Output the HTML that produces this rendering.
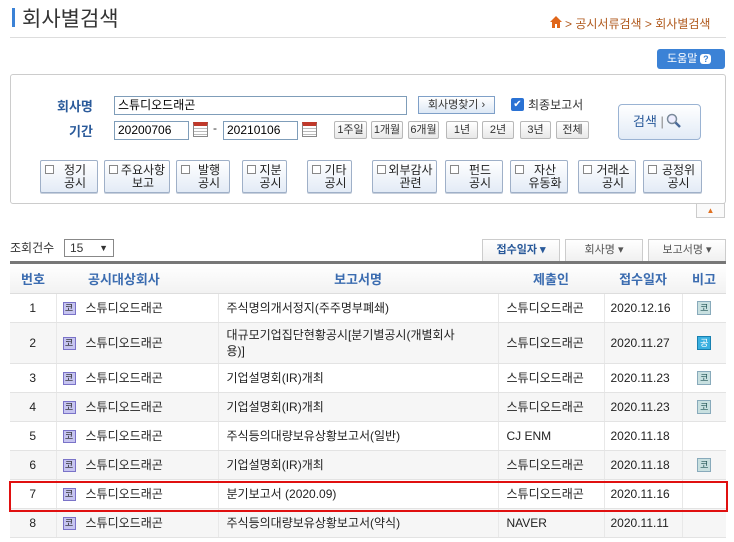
<!DOCTYPE html>
<html><head><meta charset="utf-8"><style>
*{margin:0;padding:0;box-sizing:border-box}
body{width:734px;height:542px;overflow:hidden;background:#fff;font-family:"Liberation Sans","Noto Sans CJK KR","NanumGothic",sans-serif;font-size:12px;color:#333;position:relative}
.a{position:absolute}
.inp{position:absolute;border:1px solid #7f9db9;background:#fff;height:19px;font-size:12px;line-height:17px;padding-left:3px;color:#000}
.pb{position:absolute;top:121px;height:18px;border:1px solid #b8b8b8;border-radius:2px;background:linear-gradient(#fff,#e8e8e8);font-size:11px;line-height:16px;text-align:center;color:#333}
.cat{position:absolute;top:160px;height:33px;border:1px solid #9fb0c8;border-radius:2px;background:linear-gradient(#fff,#e3ebf6);font-size:12px;line-height:13px;text-align:center;padding:3px 0 0 12px;color:#222;box-shadow:0 1px 0 #c8d0dc}
.cat i{position:absolute;left:4px;top:4px;width:9px;height:9px;border:1px solid #888;background:#fff}
.cal{position:absolute;top:122px;width:15px;height:15px;border:1px solid #888;border-top:4px solid #c0392b;background:repeating-linear-gradient(#fff 0 2px,#bbb 2px 3px)}
.tab{position:absolute;top:239px;height:22px;border:1px solid #ccc;border-bottom:none;background:linear-gradient(#fff,#f0f0f0);font-size:11px;line-height:21px;text-align:center;color:#555}
table{position:absolute;left:10px;top:264px;width:716px;border-collapse:collapse}
th{height:29px;color:#3b6cb0;font-weight:bold;font-size:13px;background:linear-gradient(#fff,#f2f2f2);border-bottom:1px solid #ddd}
td{height:29px;border-bottom:1px solid #e3e3e3;border-left:1px solid #e8e8e8;font-size:12px;color:#222}
td:first-child{border-left:none;text-align:center}
tr.g td{background:#f6f6f6}
.k{display:inline-block;width:13px;height:13px;background:#c6c4f0;border:1px solid #7a73c8;font-size:9px;line-height:11px;text-align:center;color:#222;vertical-align:middle;margin:0 10px 0 6px}
.b{display:inline-block;width:14px;height:14px;background:#c8e0e0;border:1px solid #8ab;font-size:9px;line-height:12px;text-align:center;color:#255;}
.b2{background:#3ab0e0;border-color:#1880b0;color:#fff}
</style></head><body>
<div class="a" style="left:12px;top:8px;width:3px;height:19px;background:#3b82d6"></div>
<div class="a" style="left:22px;top:3px;font-size:21px;color:#333">회사별검색</div>
<svg class="a" style="left:550px;top:16px" width="12" height="12" viewBox="0 0 12 12"><path d="M6 0L0 6h2v6h3V8h2v4h3V6h2z" fill="#e0661a"/></svg>
<div class="a" style="left:565px;top:15px;font-size:12px;color:#b05a1e">&gt; 공시서류검색 &gt; 회사별검색</div>
<div class="a" style="left:10px;top:37px;width:716px;height:1px;background:#ddd"></div>
<div class="a" style="left:657px;top:49px;width:68px;height:20px;background:#3b82d6;border-radius:3px;color:#fff;font-size:11px;line-height:20px;padding-left:10px">도움말 <span style="display:inline-block;width:11px;height:10px;background:#fff;color:#3b82d6;border-radius:3px;font-size:9px;line-height:10px;text-align:center;font-weight:bold">?</span></div>

<div class="a" style="left:10px;top:74px;width:716px;height:130px;border:1px solid #ccc;border-radius:3px"></div>
<div class="a" style="left:57px;top:96px;font-size:13px;font-weight:bold;color:#2a5a9a">회사명</div>
<div class="inp" style="left:114px;top:96px;width:293px">스튜디오드래곤</div>
<div class="a" style="left:418px;top:96px;width:77px;height:18px;border:1px solid #7fa0c8;background:linear-gradient(#fff,#dde8f5);font-size:11px;line-height:16px;text-align:center">회사명찾기 ›</div>
<div class="a" style="left:511px;top:98px;width:13px;height:13px;background:#2a72d4;border-radius:2px;color:#fff;font-size:10px;line-height:13px;text-align:center">✔</div>
<div class="a" style="left:528px;top:96px;font-size:12px">최종보고서</div>
<div class="a" style="left:69px;top:121px;font-size:13px;font-weight:bold;color:#2a5a9a">기간</div>
<div class="inp" style="left:114px;top:121px;width:75px">20200706</div>
<div class="cal" style="left:193px"></div>
<div class="a" style="left:213px;top:121px">-</div>
<div class="inp" style="left:223px;top:121px;width:75px">20210106</div>
<div class="cal" style="left:302px"></div>
<div class="pb" style="left:334px;width:33px">1주일</div>
<div class="pb" style="left:371px;width:32px">1개월</div>
<div class="pb" style="left:408px;width:31px">6개월</div>
<div class="pb" style="left:446px;width:32px">1년</div>
<div class="pb" style="left:482px;width:32px">2년</div>
<div class="pb" style="left:520px;width:31px">3년</div>
<div class="pb" style="left:556px;width:33px">전체</div>
<div class="a" style="left:618px;top:104px;width:83px;height:36px;border:1px solid #9ab3d3;border-radius:4px;background:linear-gradient(#fff,#e2ebf6);font-size:13px;line-height:34px;color:#2a5a9a;padding-left:14px">검색 <span style="color:#888">|</span><svg width="16" height="16" viewBox="0 0 16 16" style="vertical-align:-3px;margin-left:2px"><circle cx="6" cy="6" r="4.5" fill="#eef" stroke="#7a8a9a" stroke-width="1.5"/><path d="M9.5 9.5L14 14" stroke="#4a6a9a" stroke-width="2.5"/></svg></div>

<div class="cat" style="left:40px;width:58px"><i></i>정기<br>공시</div>
<div class="cat" style="left:104px;width:66px"><i></i>주요사항<br>보고</div>
<div class="cat" style="left:176px;width:54px"><i></i>발행<br>공시</div>
<div class="cat" style="left:242px;width:45px"><i></i>지분<br>공시</div>
<div class="cat" style="left:307px;width:45px"><i></i>기타<br>공시</div>
<div class="cat" style="left:372px;width:65px"><i></i>외부감사<br>관련</div>
<div class="cat" style="left:445px;width:58px"><i></i>펀드<br>공시</div>
<div class="cat" style="left:510px;width:58px"><i></i>자산<br>유동화</div>
<div class="cat" style="left:578px;width:58px"><i></i>거래소<br>공시</div>
<div class="cat" style="left:643px;width:59px"><i></i>공정위<br>공시</div>
<div class="a" style="left:696px;top:203px;width:29px;height:15px;border:1px solid #ccc;background:#fafafa;color:#e07020;font-size:8px;text-align:center;line-height:13px">▲</div>

<div class="a" style="left:10px;top:239px;font-size:12px">조회건수</div>
<div class="a" style="left:64px;top:239px;width:50px;height:18px;border:1px solid #888;background:#fff;font-size:12px;line-height:16px;padding-left:5px">15 <span style="position:absolute;right:5px;font-size:9px">▼</span></div>
<div class="tab" style="left:482px;width:78px;color:#2a5a9a;font-weight:bold">접수일자 ▾</div>
<div class="tab" style="left:565px;width:78px">회사명 ▾</div>
<div class="tab" style="left:648px;width:78px">보고서명 ▾</div>
<div class="a" style="left:10px;top:261px;width:716px;height:3px;background:#777"></div>

<table>
<tr><th style="width:46px">번호</th><th style="width:162px;text-align:left;padding-left:32px">공시대상회사</th><th style="width:280px">보고서명</th><th style="width:106px">제출인</th><th style="width:78px">접수일자</th><th>비고</th></tr>
<tr><td>1</td><td><span class="k">코</span>스튜디오드래곤</td><td style="padding-left:8px">주식명의개서정지(주주명부폐쇄)</td><td style="padding-left:8px">스튜디오드래곤</td><td style="padding-left:6px">2020.12.16</td><td style="text-align:center"><span class="b">코</span></td></tr>
<tr class="g"><td style="height:41px">2</td><td><span class="k">코</span>스튜디오드래곤</td><td style="padding-left:8px;line-height:16px">대규모기업집단현황공시[분기별공시(개별회사<br>용)]</td><td style="padding-left:8px">스튜디오드래곤</td><td style="padding-left:6px">2020.11.27</td><td style="text-align:center"><span class="b b2">공</span></td></tr>
<tr><td>3</td><td><span class="k">코</span>스튜디오드래곤</td><td style="padding-left:8px">기업설명회(IR)개최</td><td style="padding-left:8px">스튜디오드래곤</td><td style="padding-left:6px">2020.11.23</td><td style="text-align:center"><span class="b">코</span></td></tr>
<tr class="g"><td>4</td><td><span class="k">코</span>스튜디오드래곤</td><td style="padding-left:8px">기업설명회(IR)개최</td><td style="padding-left:8px">스튜디오드래곤</td><td style="padding-left:6px">2020.11.23</td><td style="text-align:center"><span class="b">코</span></td></tr>
<tr><td>5</td><td><span class="k">코</span>스튜디오드래곤</td><td style="padding-left:8px">주식등의대량보유상황보고서(일반)</td><td style="padding-left:8px">CJ ENM</td><td style="padding-left:6px">2020.11.18</td><td></td></tr>
<tr class="g"><td>6</td><td><span class="k">코</span>스튜디오드래곤</td><td style="padding-left:8px">기업설명회(IR)개최</td><td style="padding-left:8px">스튜디오드래곤</td><td style="padding-left:6px">2020.11.18</td><td style="text-align:center"><span class="b">코</span></td></tr>
<tr><td>7</td><td><span class="k">코</span>스튜디오드래곤</td><td style="padding-left:8px">분기보고서 (2020.09)</td><td style="padding-left:8px">스튜디오드래곤</td><td style="padding-left:6px">2020.11.16</td><td></td></tr>
<tr class="g"><td>8</td><td><span class="k">코</span>스튜디오드래곤</td><td style="padding-left:8px">주식등의대량보유상황보고서(약식)</td><td style="padding-left:8px">NAVER</td><td style="padding-left:6px">2020.11.11</td><td></td></tr>
</table>
<div class="a" style="left:9px;top:481px;width:719px;height:31px;border:2px solid #e01010"></div>
</body></html>
